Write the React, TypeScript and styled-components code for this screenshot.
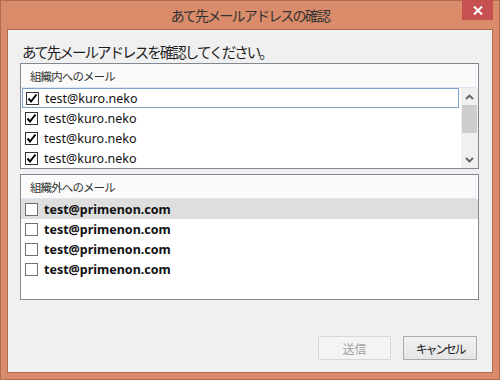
import * as React from 'react'
import styled, { createGlobalStyle } from 'styled-components'

const GlobalStyle = createGlobalStyle`
  html, body {
    margin: 0;
    padding: 0;
    background: #ffffff;
  }
`

const jp = `'Noto Sans CJK JP', 'Noto Sans', sans-serif`
const latin = `'Noto Sans', 'Noto Sans CJK JP', sans-serif`

const Window = styled.div`
  position: relative;
  box-sizing: border-box;
  width: 500px;
  height: 380px;
  background: #d98b6a;
  border: 1px solid #b06c4e;
  padding: 0 6px 6px;
  display: flex;
  flex-direction: column;
`

const TitleBar = styled.div`
  height: 28px;
  display: flex;
  align-items: center;
  justify-content: center;
  font-family: ${jp};
  font-size: 14px;
  letter-spacing: -1.8px;
  color: #333333;
  padding-bottom: 1px;
  box-sizing: border-box;
`

const CloseButton = styled.div`
  position: absolute;
  top: -1px;
  right: 6px;
  width: 31px;
  height: 20px;
  background: #c75050;
  display: flex;
  align-items: center;
  justify-content: center;
`

const Client = styled.div`
  flex: 1;
  background: #f0f0f0;
  border: 1px solid #b06c4e;
  padding: 9px 13px 12px 12px;
  display: flex;
  flex-direction: column;
`

const Heading = styled.div`
  height: 24px;
  padding-left: 2px;
  font-family: ${jp};
  font-size: 14.5px;
  letter-spacing: -1.95px;
  color: #1e1e1e;
  line-height: 25px;
`

const ListBox = styled.div<{ height: number }>`
  box-sizing: border-box;
  height: ${p => p.height}px;
  border: 1px solid #828790;
  background: #ffffff;
  display: flex;
  flex-direction: column;
  & + & {
    margin-top: 5px;
  }
`

const ListHeader = styled.div`
  height: 23px;
  margin-right: 2px;
  background: #fafafa;
  border-right: 1px solid #e3eaf5;
  border-bottom: 1px solid #dde6f3;
  padding-left: 9px;
  display: flex;
  align-items: center;
  font-family: ${jp};
  font-size: 11.5px;
  letter-spacing: -0.9px;
  color: #333333;
`

const ListBody = styled.div`
  flex: 1;
  display: flex;
`

const Rows = styled.div`
  flex: 1;
`

const Row = styled.div<{ focused?: boolean; selected?: boolean; bold?: boolean }>`
  box-sizing: border-box;
  height: 20px;
  display: flex;
  align-items: center;
  gap: 6px;
  padding-left: ${p => (p.focused ? 3 : 4)}px;
  margin-right: ${p => (p.focused ? 2 : 0)}px;
  margin-left: ${p => (p.focused ? 1 : 0)}px;
  border: ${p => (p.focused ? '1px solid #7da2ce' : 'none')};
  background: ${p => (p.selected ? '#dedede' : 'transparent')};
  font-family: ${latin};
  font-size: 12.5px;
  font-weight: ${p => (p.bold ? 700 : 400)};
  color: #111111;
`

const Box = styled.span<{ checked: boolean }>`
  box-sizing: border-box;
  width: 13px;
  height: 13px;
  flex: none;
  border: 1px solid ${p => (p.checked ? '#333333' : '#707070')};
  background: #ffffff;
  display: flex;
  align-items: center;
  justify-content: center;
`

const ScrollBar = styled.div`
  width: 17px;
  background: #f0f0f0;
  display: flex;
  flex-direction: column;
  align-items: center;
`

const ScrollArrow = styled.div`
  height: 17px;
  width: 100%;
  display: flex;
  align-items: center;
  justify-content: center;
`

const Thumb = styled.div`
  height: 28px;
  width: 15px;
  background: #cdcdcd;
`

const Track = styled.div`
  flex: 1;
`

const Footer = styled.div`
  flex: 1;
  display: flex;
  justify-content: flex-end;
  align-items: flex-end;
  gap: 12px;
  padding-right: 2px;
`

const Button = styled.div<{ disabled?: boolean }>`
  box-sizing: border-box;
  width: ${p => (p.disabled ? 73 : 74)}px;
  height: 24px;
  display: flex;
  align-items: center;
  justify-content: center;
  font-family: ${jp};
  font-size: 12px;
  letter-spacing: ${p => (p.disabled ? '0' : '-2.3px')};
  border: 1px solid ${p => (p.disabled ? '#d9d9d9' : '#acacac')};
  background: ${p =>
    p.disabled ? '#f4f4f4' : 'linear-gradient(#f0f0f0, #e5e5e5)'};
  color: ${p => (p.disabled ? '#a0a0a0' : '#1e1e1e')};
`

const Check = () => (
  <svg width="11" height="11" viewBox="0 0 11 11">
    <path d="M1.5 5.5 L4 8.5 L9.5 1.5" fill="none" stroke="#000" strokeWidth="2" />
  </svg>
)

const Chevron: React.FC<{ up?: boolean }> = ({ up }) => (
  <svg width="9" height="6" viewBox="0 0 9 6">
    <path
      d={up ? 'M1 5 L4.5 1.5 L8 5' : 'M1 1 L4.5 4.5 L8 1'}
      fill="none"
      stroke="#606060"
      strokeWidth="1.8"
    />
  </svg>
)

const inside = ['test@kuro.neko', 'test@kuro.neko', 'test@kuro.neko', 'test@kuro.neko']
const outside = [
  'test@primenon.com',
  'test@primenon.com',
  'test@primenon.com',
  'test@primenon.com',
]

const App = () => (
  <>
    <GlobalStyle />
    <Window>
      <TitleBar>あて先メールアドレスの確認</TitleBar>
      <CloseButton>
        <svg width="10" height="9" viewBox="0 0 10 9">
          <path d="M1 0.5 L9 8.5 M9 0.5 L1 8.5" stroke="#fff" strokeWidth="2" />
        </svg>
      </CloseButton>
      <Client>
        <Heading>あて先メールアドレスを確認してください。</Heading>
        <ListBox height={106}>
          <ListHeader>組織内へのメール</ListHeader>
          <ListBody>
            <Rows>
              {inside.map((mail, i) => (
                <Row key={i} focused={i === 0}>
                  <Box checked>
                    <Check />
                  </Box>
                  {mail}
                </Row>
              ))}
            </Rows>
            <ScrollBar>
              <ScrollArrow>
                <Chevron up />
              </ScrollArrow>
              <Thumb />
              <Track />
              <ScrollArrow>
                <Chevron />
              </ScrollArrow>
            </ScrollBar>
          </ListBody>
        </ListBox>
        <ListBox height={126}>
          <ListHeader>組織外へのメール</ListHeader>
          <ListBody>
            <Rows>
              {outside.map((mail, i) => (
                <Row key={i} bold selected={i === 0}>
                  <Box checked={false} />
                  {mail}
                </Row>
              ))}
            </Rows>
          </ListBody>
        </ListBox>
        <Footer>
          <Button disabled>送信</Button>
          <Button>キャンセル</Button>
        </Footer>
      </Client>
    </Window>
  </>
)

export default App
